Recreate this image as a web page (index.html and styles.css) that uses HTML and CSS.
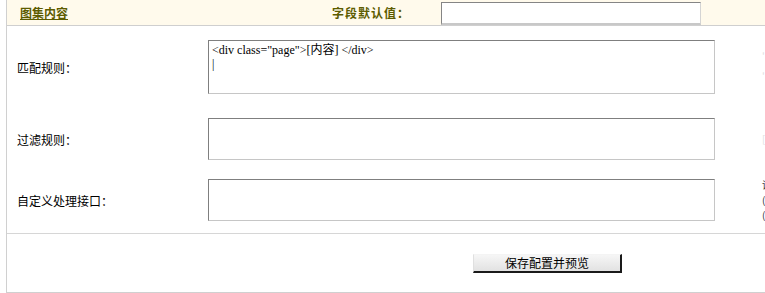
FILE: index.html
```html
<!DOCTYPE html>
<html lang="zh-CN">
<head>
    <meta charset="UTF-8">
    <title>采集规则</title>
    <link rel="stylesheet" href="styles.css">
</head>
<body>
    <div class="panel">
        <div class="head">
            <a class="tab" href="#">图集内容</a>
            <span class="head-label">字段默认值：</span>
            <input type="text" class="head-input">
        </div>

        <div class="row row-first">
            <label class="row-label">匹配规则：</label>
            <textarea class="box box-tall">&lt;div class="page"&gt;[内容] &lt;/div&gt;
|</textarea>
            <div class="note note-faint">'<br>'</div>
        </div>

        <div class="row row-second">
            <label class="row-label">过滤规则：</label>
            <textarea class="box"></textarea>
            <div class="note note-faint">[</div>
        </div>

        <div class="row row-third">
            <label class="row-label">自定义处理接口：</label>
            <textarea class="box"></textarea>
            <div class="note note-list">说明<br>(1)<br>(2)</div>
        </div>

        <div class="actions">
            <button class="save-btn">保存配置并预览</button>
        </div>
    </div>
</body>
</html>
```

FILE: styles.css
```css
html {
    overflow: hidden;
}
body {
    margin: 0;
    font-family: "Noto Sans CJK SC", "Liberation Sans", sans-serif;
    font-size: 12px;
    color: #000;
    background: #fff;
}
.panel {
    margin-left: 6px;
    width: 900px;
    border-left: 1px solid #d0d0d0;
    border-bottom: 1px solid #d0d0d0;
}
.head {
    display: flex;
    align-items: flex-start;
    height: 25px;
    background: #fffaec;
    border-bottom: 1px solid #cfcfcf;
}
.tab {
    margin-left: 13px;
    margin-top: 5px;
    line-height: 16px;
    font-weight: bold;
    color: #5c5c00;
    text-decoration: underline;
}
.head-label {
    margin-left: 264px;
    margin-top: 5px;
    line-height: 16px;
    font-weight: bold;
    color: #5c5c00;
    letter-spacing: 1px;
}
.head-input {
    margin: 2px 0 0 31px;
    width: 258px;
    height: 20px;
    padding: 0;
    border: 1px solid;
    border-color: #858585 #d4d4d4 #c8c8c8 #858585;
    border-width: 1px 1px 2px 1px;
    background: #fff;
}
.row {
    display: flex;
    align-items: center;
}
.row-first {
    padding-top: 14px;
}
.row-second {
    margin-top: 24px;
}
.row-third {
    margin-top: 19px;
    padding-bottom: 12px;
    border-bottom: 1px solid #d6d6d6;
}
.row-label {
    width: 201px;
    padding-left: 10px;
    box-sizing: border-box;
}
.box {
    width: 507px;
    height: 42px;
    margin: 0;
    padding: 2px 3px;
    box-sizing: border-box;
    border: 1px solid;
    border-color: #7f7f7f #c6c6c6 #c6c6c6 #7f7f7f;
    font-family: "Liberation Serif", "Noto Sans CJK SC", serif;
    font-size: 12px;
    line-height: 14px;
    resize: none;
    overflow: hidden;
}
.box-tall {
    height: 54px;
}
.note {
    margin-left: 47px;
    font-size: 10px;
    line-height: 20px;
    color: #333;
}
.note-list {
    height: 45px;
    line-height: 15px;
    margin-top: -2px;
    margin-bottom: -1px;
}
.note-faint {
    color: #e0e0e0;
}
.actions {
    height: 58px;
    padding-left: 466px;
    padding-top: 20px;
    box-sizing: border-box;
}
.save-btn {
    width: 149px;
    height: 19px;
    padding: 0;
    font-family: "Noto Sans CJK SC", sans-serif;
    font-size: 12px;
    line-height: 16px;
    color: #000;
    background: linear-gradient(#f6f6f6, #e2e2e2);
    border: 1px solid;
    border-color: #f4f4f4 #1a1a1a #1a1a1a #e0e0e0;
    border-width: 1px 2px 2px 1px;
}
```
